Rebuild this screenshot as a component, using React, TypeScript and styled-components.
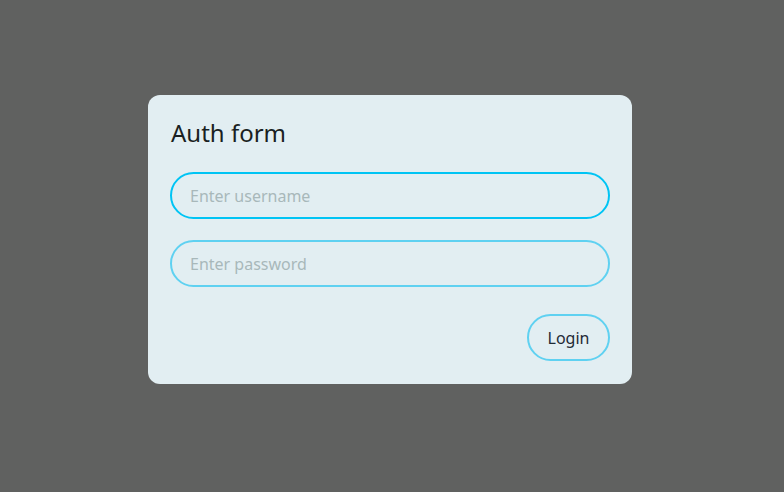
import React from "react";
import styled, { createGlobalStyle } from "styled-components";

const Global = createGlobalStyle`
  html, body { margin: 0; padding: 0; }
  body {
    background: #606160;
    font-family: "Noto Sans", "Open Sans", sans-serif;
  }
`;

const Page = styled.div`
  width: 784px;
  height: 492px;
  display: flex;
  justify-content: center;
  align-items: flex-start;
  padding-top: 95px;
  box-sizing: border-box;
  padding-right: 4px;
`;

const Card = styled.form`
  width: 484px;
  box-sizing: border-box;
  background: #e2eef2;
  border-radius: 12px;
  padding: 19px 22px 23px 22px;
  display: flex;
  flex-direction: column;
`;

const Title = styled.h1`
  margin: 0 0 20px 1px;
  font-family: "Noto Sans", sans-serif;
  font-weight: 400;
  font-size: 24px;
  line-height: 38px;
  color: #1a1f22;
`;

const Input = styled.input<{ $active?: boolean }>`
  box-sizing: border-box;
  width: 100%;
  height: 47px;
  border-radius: 24px;
  border: 2px solid ${(p) => (p.$active ? "#00c4f4" : "#5fd1f1")};
  background: transparent;
  padding: 0 18px;
  font-family: "Noto Sans", sans-serif;
  font-size: 16px;
  color: #222;
  outline: none;
  margin-bottom: 21px;
  caret-color: #222;
  &::placeholder { color: #a8b8ba; }
`;

const Footer = styled.div`
  display: flex;
  justify-content: flex-end;
  padding-top: 6px;
`;

const Button = styled.button`
  box-sizing: border-box;
  width: 83px;
  height: 47px;
  border-radius: 24px;
  border: 2px solid #5fd1f1;
  background: transparent;
  font-family: "Noto Sans", sans-serif;
  font-size: 16px;
  color: #1f2a36;
  cursor: pointer;
`;

export default function App() {
  return (
    <>
      <Global />
      <Page>
        <Card onSubmit={(e) => e.preventDefault()}>
          <Title>Auth form</Title>
          <Input $active autoFocus placeholder="Enter username" />
          <Input type="password" placeholder="Enter password" />
          <Footer>
            <Button type="submit">Login</Button>
          </Footer>
        </Card>
      </Page>
    </>
  );
}
